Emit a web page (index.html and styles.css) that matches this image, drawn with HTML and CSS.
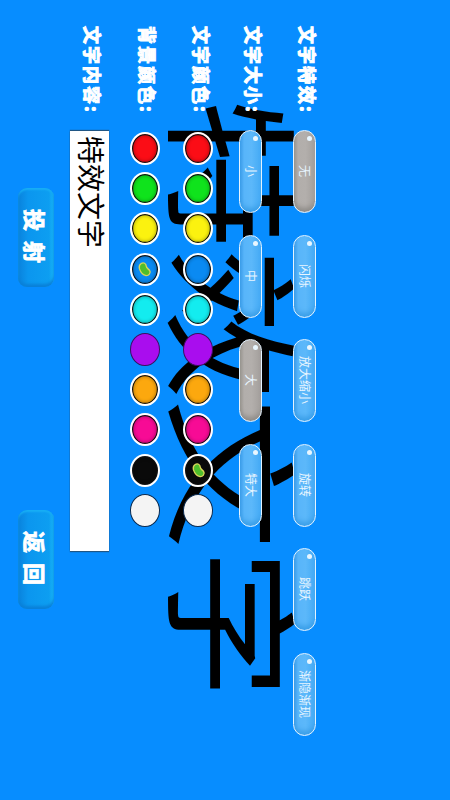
FILE: index.html
```html
<!DOCTYPE html>
<html lang="zh">
<head>
<meta charset="utf-8">
<title>特效文字</title>
<link rel="stylesheet" href="styles.css">
</head>
<body>
<main class="stage">
  <div class="preview">特效文字</div>
  <div class="row row-effect">
    <span class="label">文字特效:</span>
    <div class="options">
      <button class="pill off">无</button>
      <button class="pill">闪烁</button>
      <button class="pill">放大缩小</button>
      <button class="pill">旋转</button>
      <button class="pill">跳跃</button>
      <button class="pill">渐隐渐现</button>
    </div>
  </div>
  <div class="row row-size">
    <span class="label">文字大小:</span>
    <div class="options">
      <button class="pill">小</button>
      <button class="pill">中</button>
      <button class="pill off">大</button>
      <button class="pill">特大</button>
    </div>
  </div>
  <div class="row row-text-color">
    <span class="label">文字颜色:</span>
    <div class="swatches">
      <span class="dot red"></span><span class="dot green"></span><span class="dot yellow"></span><span class="dot blue"></span><span class="dot cyan"></span><span class="dot purple"></span><span class="dot orange"></span><span class="dot pink"></span>
      <span class="dot black"><svg class="bean" viewBox="0 0 20 20"><path d="M6 3C9 1 12 3 12 6C12 8 14 9 16 11C18 14 15 18 11 17C7 16 5 12 4 9C3.5 6 4 4 6 3Z"/></svg></span>
      <span class="dot white"></span>
    </div>
  </div>
  <div class="row row-bg-color">
    <span class="label">背景颜色:</span>
    <div class="swatches">
      <span class="dot red"></span><span class="dot green"></span><span class="dot yellow"></span>
      <span class="dot blue"><svg class="bean" viewBox="0 0 20 20"><path d="M6 3C9 1 12 3 12 6C12 8 14 9 16 11C18 14 15 18 11 17C7 16 5 12 4 9C3.5 6 4 4 6 3Z"/></svg></span>
      <span class="dot cyan"></span><span class="dot purple"></span><span class="dot orange"></span><span class="dot pink"></span><span class="dot black"></span><span class="dot white"></span>
    </div>
  </div>
  <div class="row row-input">
    <span class="label">文字内容:</span>
    <div class="field">特效文字</div>
  </div>
  <div class="actions">
    <button class="action">投 射</button>
    <button class="action">返 回</button>
  </div>
</main>
</body>
</html>
```
FILE: styles.css
```css
* { box-sizing: border-box; }
html, body { margin: 0; padding: 0; background: #078dff; }
.stage {
  position: relative;
  width: 450px;
  height: 800px;
  overflow: hidden;
  writing-mode: vertical-rl;
  text-orientation: sideways;
  padding-block-start: 134px;
  padding-inline-start: 26px;
  display: flex;
  flex-direction: column;
  font-family: "Noto Sans CJK SC", sans-serif;
  background: #078dff;
}
.preview {
  position: absolute;
  inset-inline-start: 99px;
  inset-block-start: 113px;
  font-size: 150px;
  line-height: 217px;
  color: #000;
  white-space: nowrap;
  transform: scaleX(.91);
  transform-origin: 100% 50%;
}
.row { position: relative; display: flex; align-items: center; }
.row-effect, .row-size { block-size: 23px; }
.row-size { margin-block-start: 31px; }
.row-text-color { block-size: 30px; margin-block-start: 26px; }
.row-bg-color { block-size: 30px; margin-block-start: 23.5px; }
.row-input { block-size: 39px; margin-block-start: 20.5px; }
.label {
  inline-size: 104px;
  flex: none;
  padding-block-end: 7px;
  color: #fff;
  font-size: 18px;
  font-weight: 700;
  line-height: 18px;
  letter-spacing: 2px;
  -webkit-text-stroke: 1px #fff;
  white-space: nowrap;
}
.options { display: flex; gap: 21.5px; }
.pill {
  position: relative;
  inline-size: 83px;
  block-size: 23px;
  padding: 0;
  border: 1.5px solid #e4f3ff;
  border-radius: 12px;
  color: #e8f5ff;
  font-family: inherit;
  font-size: 12px;
  line-height: 20px;
  background: linear-gradient(270deg, #44aaf5 0%, #5cb8fa 45%, #58b5fa 80%, #3a9ce8 100%);
  box-shadow: inset 0 -7px 5px -3px #3b9fe8;
}
.pill::before {
  content: "";
  position: absolute;
  inset-inline-start: 5px;
  inset-block-start: 3px;
  inline-size: 5px;
  block-size: 5px;
  border-radius: 50%;
  background: #e8f6ff;
}
.pill.off {
  background: linear-gradient(270deg, #a39f9c 0%, #b3afac 45%, #b2aeab 80%, #98958f 100%);
  box-shadow: inset 0 -7px 5px -3px #8f8c88;
}
.swatches { display: flex; gap: 7.2px; margin-inline-start: 2px; }
.dot {
  display: flex;
  align-items: center;
  justify-content: center;
  inline-size: 33px;
  block-size: 30px;
  flex: none;
  border-radius: 50%;
  border: 2px solid #fff;
  box-shadow: inset 0 0 0 1.2px #111, inset 0 0 3px 2.5px rgba(0, 0, 0, .2);
}
.red { background: #fb0d16; }
.green { background: #0fe31c; }
.yellow { background: #fbf20f; }
.blue { background: #0a8af2; }
.cyan { background: #13ecef; }
.purple { background: #a90dee; border-color: #3a1060; border-width: 1px; box-shadow: none; }
.orange { background: #fca80e; }
.pink { background: #f70b95; }
.black { background: #0a0a0a; }
.white { background: #f4f4f4; border-color: #0a2a50; border-width: 1.5px; box-shadow: none; }
.bean { inline-size: 17px; block-size: 17px; fill: #4fbe2c; stroke: #d8d65a; stroke-width: 1.6; }
.field {
  inline-size: 420px;
  block-size: 39px;
  margin-inline-start: 1px;
  padding-inline-start: 5px;
  background: #fff;
  color: #000;
  font-size: 28px;
  line-height: 35px;
  box-shadow: 0 -1px 1px rgba(50, 50, 50, .6), 0 1px 1px rgba(50, 50, 50, .6);
}
.actions { display: flex; gap: 223px; margin-block-start: 16px; margin-inline-start: 162px; }
.action {
  inline-size: 99px;
  block-size: 36px;
  padding: 0;
  border: none;
  border-radius: 9px;
  color: #fff;
  font-family: inherit;
  font-size: 22px;
  font-weight: 700;
  line-height: 36px;
  letter-spacing: 2.5px;
  -webkit-text-stroke: .8px #fff;
  background: linear-gradient(270deg, #1ab6f6 0%, #0d9ef1 14%, #0b96ef 72%, #0a82dc 100%);
  box-shadow: inset 0 -3px 3px #0a80d8, inset 0 2px 2px #18aef5;
}
```
